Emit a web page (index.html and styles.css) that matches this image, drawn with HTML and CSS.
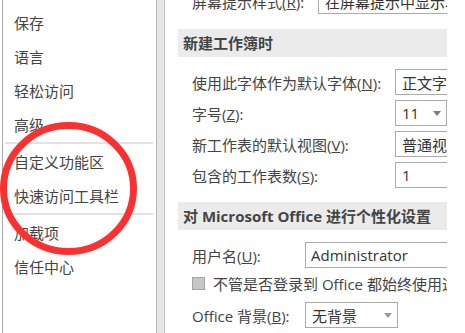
FILE: index.html
```html
<!DOCTYPE html>
<html lang="zh-CN">
<head>
<meta charset="utf-8">
<title>Excel 选项</title>
<link rel="stylesheet" href="styles.css">
</head>
<body>
<div class="app">
  <nav class="sidebar">
    <div class="item">保存</div>
    <div class="item">语言</div>
    <div class="item">轻松访问</div>
    <div class="item">高级</div>
    <div class="sep"></div>
    <div class="item">自定义功能区</div>
    <div class="item">快速访问工具栏</div>
    <div class="sep"></div>
    <div class="item">加载项</div>
    <div class="item">信任中心</div>
  </nav>
  <div class="splitter"></div>
  <main class="main">
    <div class="row row-top">
      <span class="label label-top">屏幕提示样式(<u>R</u>):</span>
      <div class="field field-wide">在屏幕提示中显示功能说明</div>
    </div>

    <h2 class="section section-first">新建工作簿时</h2>
    <div class="row row-first">
      <span class="label label-g1">使用此字体作为默认字体(<u>N</u>):</span>
      <div class="field field-wide">正文字体</div>
    </div>
    <div class="row">
      <span class="label label-g1">字号(<u>Z</u>):</span>
      <div class="field field-select field-size"><span>11</span><span class="arrow"></span></div>
    </div>
    <div class="row">
      <span class="label label-g1">新工作表的默认视图(<u>V</u>):</span>
      <div class="field field-wide">普通视图</div>
    </div>
    <div class="row">
      <span class="label label-g1">包含的工作表数(<u>S</u>):</span>
      <div class="field field-wide">1</div>
    </div>

    <h2 class="section section-second">对 Microsoft Office 进行个性化设置</h2>
    <div class="row row-first">
      <span class="label label-g2">用户名(<u>U</u>):</span>
      <div class="field field-wide field-user">Administrator</div>
    </div>
    <div class="row row-check">
      <span class="checkbox"></span>
      <span class="check-text">不管是否登录到 Office 都始终使用这些值。</span>
    </div>
    <div class="row row-bg">
      <span class="label label-g2">Office 背景(<u>B</u>):</span>
      <div class="field field-select field-bg"><span>无背景</span><span class="arrow arrow-light"></span></div>
    </div>
  </main>
  <svg class="mark" width="160" height="333" viewBox="0 0 160 333" aria-hidden="true">
    <ellipse cx="68.5" cy="188.5" rx="65" ry="63" fill="none" stroke="#fb3131" stroke-width="7"/>
  </svg>
</div>
</body>
</html>
```

FILE: styles.css
```css
* {
  box-sizing: border-box;
  margin: 0;
  padding: 0;
}

html,
body {
  width: 465px;
  height: 333px;
  overflow: hidden;
  background: #ffffff;
}

body {
  font-family: "Open Sans", "Noto Sans CJK SC", sans-serif;
  font-size: 15px;
  color: #444444;
}

.app {
  position: relative;
  display: flex;
  height: 333px;
}

/* left navigation */
.sidebar {
  flex: none;
  width: 154px;
  margin-left: 2px;
  border-left: 1px solid #a9a9a9;
  padding-top: 6px;
}

.item {
  height: 34px;
  line-height: 34px;
  padding-left: 11px;
  white-space: nowrap;
}

.sep {
  height: 2px;
  margin: 0 3px 1px 2px;
  background: #e2e2e2;
}

.splitter {
  flex: none;
  width: 9px;
  background: #e6e6e6;
  border-left: 1px solid #b3b3b3;
  border-right: 1px solid #c4c4c4;
}

/* right panel */
.main {
  flex: none;
  width: 282px;
  height: 333px;
  overflow: hidden;
  padding-left: 13px;
}

.section {
  height: 28px;
  line-height: 28px;
  padding-left: 5px;
  background: #ebebeb;
  font-size: 15px;
  font-weight: bold;
  color: #444444;
  white-space: nowrap;
}

.section-first {
  margin-top: 15px;
}

.section-second {
  margin-top: 14px;
}

.row {
  display: flex;
  align-items: center;
  height: 26px;
  margin-top: 5px;
  padding-left: 14px;
  white-space: nowrap;
}

.row-top {
  margin-top: -12px;
}

.row-first {
  margin-top: 12px;
}

.row-check {
  height: 22px;
  margin-top: 4px;
}

.row-bg {
  margin-top: 8px;
}

.label {
  flex: none;
  white-space: nowrap;
}

.label-top {
  width: 126px;
}

.label-g1 {
  width: 203px;
}

.label-g2 {
  width: 113px;
}

.field {
  flex: none;
  display: flex;
  align-items: center;
  height: 26px;
  border: 1px solid #ababab;
  padding-left: 6px;
  background: #ffffff;
  color: #333333;
  white-space: nowrap;
  overflow: hidden;
}

.field-wide {
  width: 160px;
}

.field-user {
  width: 170px;
  padding-left: 5px;
}

.field-select {
  justify-content: space-between;
  padding-right: 4px;
}

.field-size {
  width: 52px;
}

.field-bg {
  width: 93px;
}

.arrow {
  width: 0;
  height: 0;
  border-left: 4px solid transparent;
  border-right: 4px solid transparent;
  border-top: 5px solid #7c7c7c;
  margin-right: 1px;
}

.arrow-light {
  border-top-color: #9a9a9a;
  margin-right: 1px;
}

.checkbox {
  flex: none;
  width: 13px;
  height: 13px;
  margin-right: 8px;
  border: 1px solid #a3a3a3;
  background: #c6c6c6;
}

.check-text {
  white-space: nowrap;
}

.mark {
  position: absolute;
  left: 0;
  top: 0;
  pointer-events: none;
}
```
